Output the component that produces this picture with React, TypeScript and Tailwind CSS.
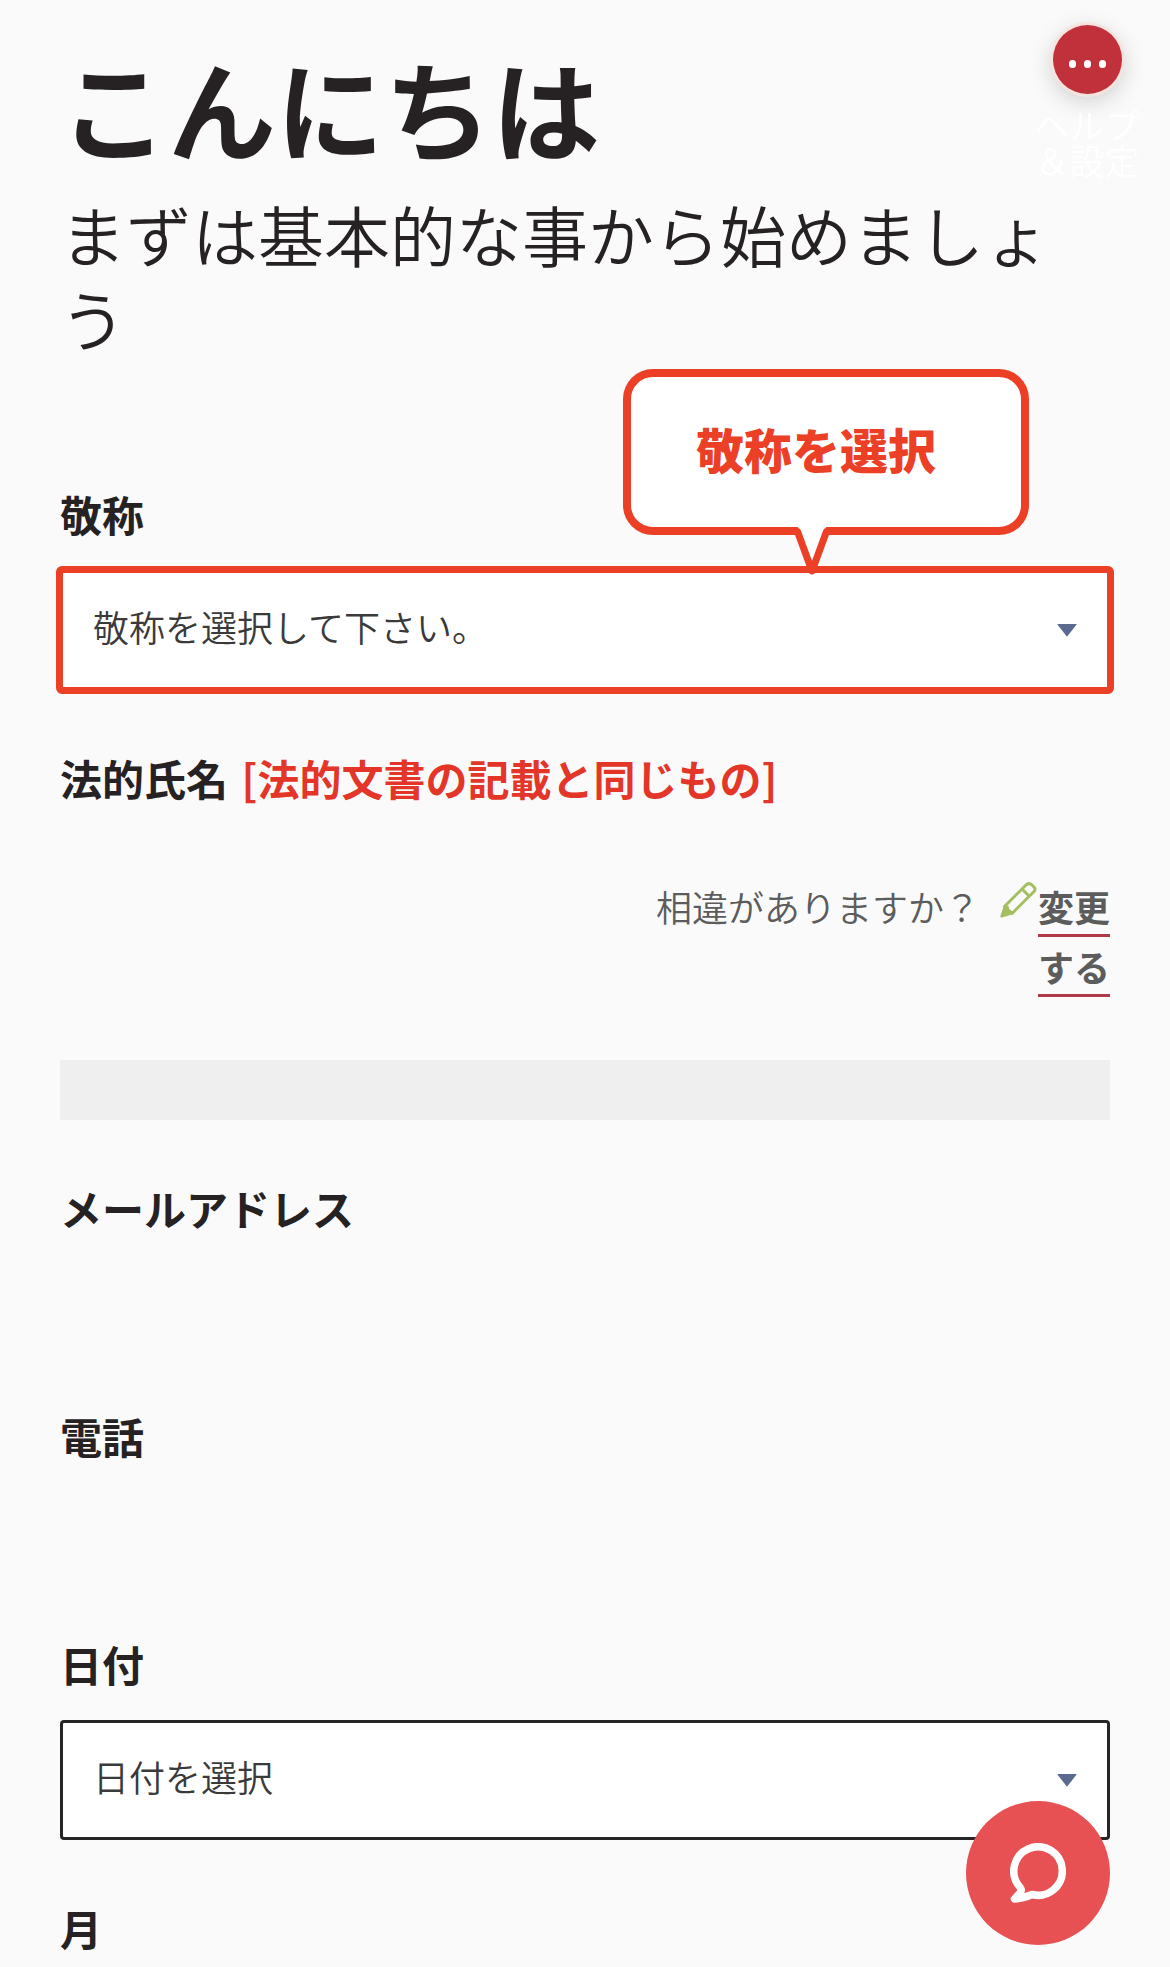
import type { ReactNode } from "react";

interface SelectFieldProps {
  id: string;
  label: string;
  placeholder: string;
  highlighted?: boolean;
  hint?: ReactNode;
}

const labelClass = "block text-[42px] leading-[60px] font-semibold text-[#262223]";

function SelectField({ id, label, placeholder, highlighted, hint }: SelectFieldProps) {
  const frame = highlighted
    ? "rounded-[2px] outline-[7px] -outline-offset-[3px] outline-[#eb4026]"
    : "rounded-[4px]";

  return (
    <div className="relative">
      <label htmlFor={id} className={labelClass}>
        {label}
      </label>
      <div className="relative mt-[26px]">
        <select
          id={id}
          className={`block h-[120px] w-full appearance-none border-[3px] border-[#262626] bg-white pr-20 pb-2 pl-[30px] text-[36px] font-[350] text-[#3a3a3a] ${frame}`}
        >
          <option>{placeholder}</option>
        </select>
        <svg
          viewBox="0 0 20 13"
          className="pointer-events-none absolute top-[54px] right-[33px] h-[13px] w-5"
          aria-hidden="true"
        >
          <path d="M1 0h18q1 0 .4 .8L10.6 12q-.6 .8-1.2 0L.6 .8Q0 0 1 0z" fill="#5b6b8f" />
        </svg>
      </div>
      {hint}
    </div>
  );
}

/** Callout that points down at the field below it. */
function Callout({ children }: { children: ReactNode }) {
  return (
    <div className="absolute right-[81px] bottom-[155px] h-[166px] w-[406px] rounded-[30px] border-8 border-[#eb4026] bg-white">
      <p className="pt-[41px] pl-[65px] text-[48px] leading-[60px] font-black text-[#eb4026]">
        {children}
      </p>
      <svg
        viewBox="0 0 40 50"
        className="absolute top-[149px] left-[161px] h-[50px] w-10"
        aria-hidden="true"
      >
        <path d="M5.500 0L20 45L34.500 0z" fill="#fff" />
        <path
          d="M4 5.500H5.500L20 45L34.500 5.500H36"
          fill="none"
          stroke="#eb4026"
          strokeWidth="7"
          strokeLinecap="round"
          strokeLinejoin="round"
        />
      </svg>
    </div>
  );
}

function PencilIcon() {
  return (
    <svg viewBox="0 0 37 36" className="h-9 w-[37px] shrink-0" aria-hidden="true">
      <path
        d="M4.500 24.500L26.500 2.500Q29.500 .500 32 3L34 5Q36 7 34 9.500L12 31.500zM22.500 7.500L29.500 14.500"
        fill="none"
        stroke="#a3bf5f"
        strokeWidth="3"
        strokeLinejoin="round"
      />
      <path d="M4 23.500L8.500 24L9.500 28L13 29.500L12 32.500L2 35.500Q0 36 .4 34z" fill="#a3bf5f" />
    </svg>
  );
}

export default function App() {
  return (
    <main
      lang="ja"
      className="min-h-screen bg-[#fafafa] px-[60px] pt-[41px] font-['Noto_Sans_CJK_JP',sans-serif] text-[#262223]"
    >
      <h1 className="text-[108px] leading-[130px] font-bold">こんにちは</h1>
      <p className="mt-5 text-[66px] leading-[84px] font-[350]">
        まずは基本的な事から始めましょう
      </p>

      <form className="mt-[125px] flex flex-col gap-[58px]">
        <SelectField
          id="title"
          label="敬称"
          placeholder="敬称を選択して下さい。"
          highlighted
          hint={<Callout>敬称を選択</Callout>}
        />

        <section>
          <h2 className={labelClass}>
            法的氏名 <span className="ml-1 text-[#e33629]">[法的文書の記載と同じもの]</span>
          </h2>
          <div className="mt-[68px] flex justify-end text-[36px] leading-[60px] text-[#5c5c5c]">
            <span className="mr-5 font-[350]">相違がありますか？</span>
            <span className="pt-1.5">
              <PencilIcon />
            </span>
            <div className="w-[73px] pl-px">
              <a
                href="#change"
                className="border-b-[3px] border-[#b03a48] pb-0.5 font-semibold"
              >
                変更する
              </a>
            </div>
          </div>
          <div className="mt-16 h-[60px] bg-[#efefef]" />
        </section>

        <section>
          <h2 className={labelClass}>メールアドレス</h2>
          <div className="h-[110px]" />
        </section>

        <section>
          <h2 className={labelClass}>電話</h2>
          <div className="h-[110px]" />
        </section>

        <SelectField id="date" label="日付" placeholder="日付を選択" />

        <h2 className={labelClass}>月</h2>
      </form>

      <div className="absolute top-[25px] right-[29px] flex w-[108px] flex-col items-center">
        <button
          type="button"
          aria-label="メニュー"
          className="flex size-[69px] items-center justify-center gap-2 rounded-full bg-[#c0313c] pt-2 shadow-[0_0_0_3px_#f7e4de,0_6px_24px_rgba(0,0,0,0.2)]"
        >
          <i className="h-2 w-[7px] rounded-full bg-white" />
          <i className="h-2 w-[7px] rounded-full bg-white" />
          <i className="h-2 w-[7px] rounded-full bg-white" />
        </button>
        <p className="mt-3 text-center text-[35px] leading-9 font-[350] text-white">
          ヘルプ
          <br />
          ＆設定
        </p>
      </div>

      <button
        type="button"
        aria-label="チャット"
        className="fixed right-[60px] bottom-[22px] flex size-36 items-center justify-center rounded-full bg-[#e75153]"
      >
        <svg viewBox="0 0 56 60" className="h-[60px] w-14" aria-hidden="true">
          <path
            d="M22 51.500A24.250 24.250 0 1 0 10 44.200Q12.500 47.500 9.500 50.500L4.500 56Q13 55.500 22 51.500z"
            fill="none"
            stroke="#fff"
            strokeWidth="7.500"
            strokeLinecap="round"
            strokeLinejoin="round"
          />
        </svg>
      </button>
    </main>
  );
}
